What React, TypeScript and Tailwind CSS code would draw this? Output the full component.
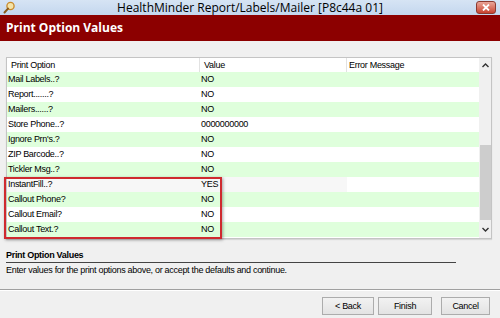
import React from "react";

const rows: { name: string; value: string; green: boolean; sel?: boolean }[] = [
  { name: "Mail Labels..?", value: "NO", green: true },
  { name: "Report.......?", value: "NO", green: false },
  { name: "Mailers......?", value: "NO", green: true },
  { name: "Store Phone..?", value: "0000000000", green: false },
  { name: "Ignore Prn's.?", value: "NO", green: true },
  { name: "ZIP Barcode..?", value: "NO", green: false },
  { name: "Tickler Msg..?", value: "NO", green: true },
  { name: "InstantFill..?", value: "YES", green: false, sel: true },
  { name: "Callout Phone?", value: "NO", green: true },
  { name: "Callout Email?", value: "NO", green: false },
  { name: "Callout Text.?", value: "NO", green: true },
];

const tahoma = { fontFamily: '"Liberation Sans", Arial, sans-serif' };

export default function App() {
  return (
    <div
      className="w-[500px] h-[318px] bg-[#f0f0f0] flex flex-col overflow-hidden relative"
      style={{ fontFamily: '"Open Sans", "Noto Sans", sans-serif' }}
    >
      {/* Title bar */}
      <div className="h-[15px] bg-gradient-to-b from-[#d6e4f4] to-[#c4d7ee] flex items-center relative">
        <svg className="absolute left-[3px] top-[1px]" width="13" height="13" viewBox="0 0 13 13">
          <circle cx="7.5" cy="5" r="3.6" fill="#f3e3a8" stroke="#c98a2a" strokeWidth="1.3" />
          <line x1="5" y1="7.6" x2="1.5" y2="11.5" stroke="#8a5a1a" strokeWidth="2" strokeLinecap="round" />
        </svg>
        <div className="flex-1 text-center text-[12px] leading-[15px] text-black">
          HealthMinder Report/Labels/Mailer [P8c44a 01]
        </div>
        <div className="absolute right-[4px] top-[1px] w-[20px] h-[13px] rounded-[3px] bg-gradient-to-b from-[#e8a598] to-[#c8412f] border border-[#8c3a30] flex items-center justify-center">
          <svg width="8" height="7" viewBox="0 0 8 7">
            <path d="M1 0.5 L7 6.5 M7 0.5 L1 6.5" stroke="white" strokeWidth="1.8" />
          </svg>
        </div>
      </div>
      {/* Red header */}
      <div className="h-[26px] bg-[#8c0000] flex items-center pl-[6px]">
        <span className="text-white font-bold text-[12px] leading-none">Print Option Values</span>
      </div>

      {/* Table area */}
      <div className="pt-[16px] pl-[6px] pr-[8px] relative">
        <div
          className="h-[182px] border border-[#c4c4c4] bg-white flex shadow-[0_1px_1px_rgba(0,0,0,0.1)] tracking-[-0.3px]"
          style={tahoma}
        >
          <div className="flex-1 flex flex-col">
            <div className="h-[14px] flex text-[9px] leading-[14px] text-black">
              <div className="w-[193px] pl-[4px] border-r border-[#e2e2e2]">Print Option</div>
              <div className="w-[147px] pl-[4px] border-r border-[#e2e2e2]">Value</div>
              <div className="flex-1 pl-[2px]">Error Message</div>
            </div>
            {rows.map((r) => (
              <div
                key={r.name}
                className={`h-[15px] flex text-[9px] leading-[15px] text-black ${r.green ? "bg-[#dfffdc]" : "bg-white"}`}
              >
                <div className={`w-[340px] flex ${r.sel ? "bg-[#f7f7f7]" : ""}`}>
                  <div className="w-[193px] pl-[1px]">{r.name}</div>
                  <div className="w-[147px] pl-[1px]">{r.value}</div>
                </div>
                <div className="flex-1" />
              </div>
            ))}
          </div>
          {/* Scrollbar */}
          <div className="w-[12px] bg-[#f0f0f0] flex flex-col items-center">
            <div className="h-[14px] flex items-center justify-center">
              <svg width="7" height="5" viewBox="0 0 7 5">
                <path d="M0.5 4 L3.5 1 L6.5 4" fill="none" stroke="#333" strokeWidth="1.4" />
              </svg>
            </div>
            <div className="h-[73px]" />
            <div className="w-[11px] h-[75px] bg-[#cdcdcd]" />
            <div className="flex-1 flex items-center justify-center">
              <svg width="7" height="5" viewBox="0 0 7 5">
                <path d="M0.5 1 L3.5 4 L6.5 1" fill="none" stroke="#333" strokeWidth="1.4" />
              </svg>
            </div>
          </div>
        </div>
        {/* Red highlight box */}
        <div className="absolute left-[4px] top-[136px] w-[218px] h-[62px] border-2 border-[#cf2a2f] shadow-[1px_1px_3px_rgba(0,0,0,0.35)]" />
      </div>

      {/* Bottom description */}
      <div className="pt-[10px] pl-[6px] tracking-[-0.3px]" style={tahoma}>
        <div className="w-[450px] border-b border-[#444] text-[9px] font-bold leading-[12px] pb-[1px] text-black">
          Print Option Values
        </div>
        <div className="text-[9px] leading-[13px] pt-[1px] text-black">
          Enter values for the print options above, or accept the defaults and continue.
        </div>
      </div>

      {/* Separator + buttons */}
      <div
        className="mt-auto border-t border-[#a0a0a0] shadow-[inset_0_1px_0_white] h-[29px] flex items-start justify-end pt-[7px] pr-[10px] tracking-[-0.3px]"
        style={tahoma}
      >
        <button className="w-[52px] h-[18px] border border-[#acacac] bg-gradient-to-b from-[#f2f2f2] to-[#e3e3e3] text-[9px] leading-none text-black">
          &lt; Back
        </button>
        <button className="ml-[4px] w-[54px] h-[18px] border border-[#acacac] bg-gradient-to-b from-[#f2f2f2] to-[#e3e3e3] text-[9px] leading-none text-black">
          Finish
        </button>
        <button className="ml-[9px] w-[49px] h-[18px] border border-[#acacac] bg-gradient-to-b from-[#f2f2f2] to-[#e3e3e3] text-[9px] leading-none text-black">
          Cancel
        </button>
      </div>
    </div>
  );
}
